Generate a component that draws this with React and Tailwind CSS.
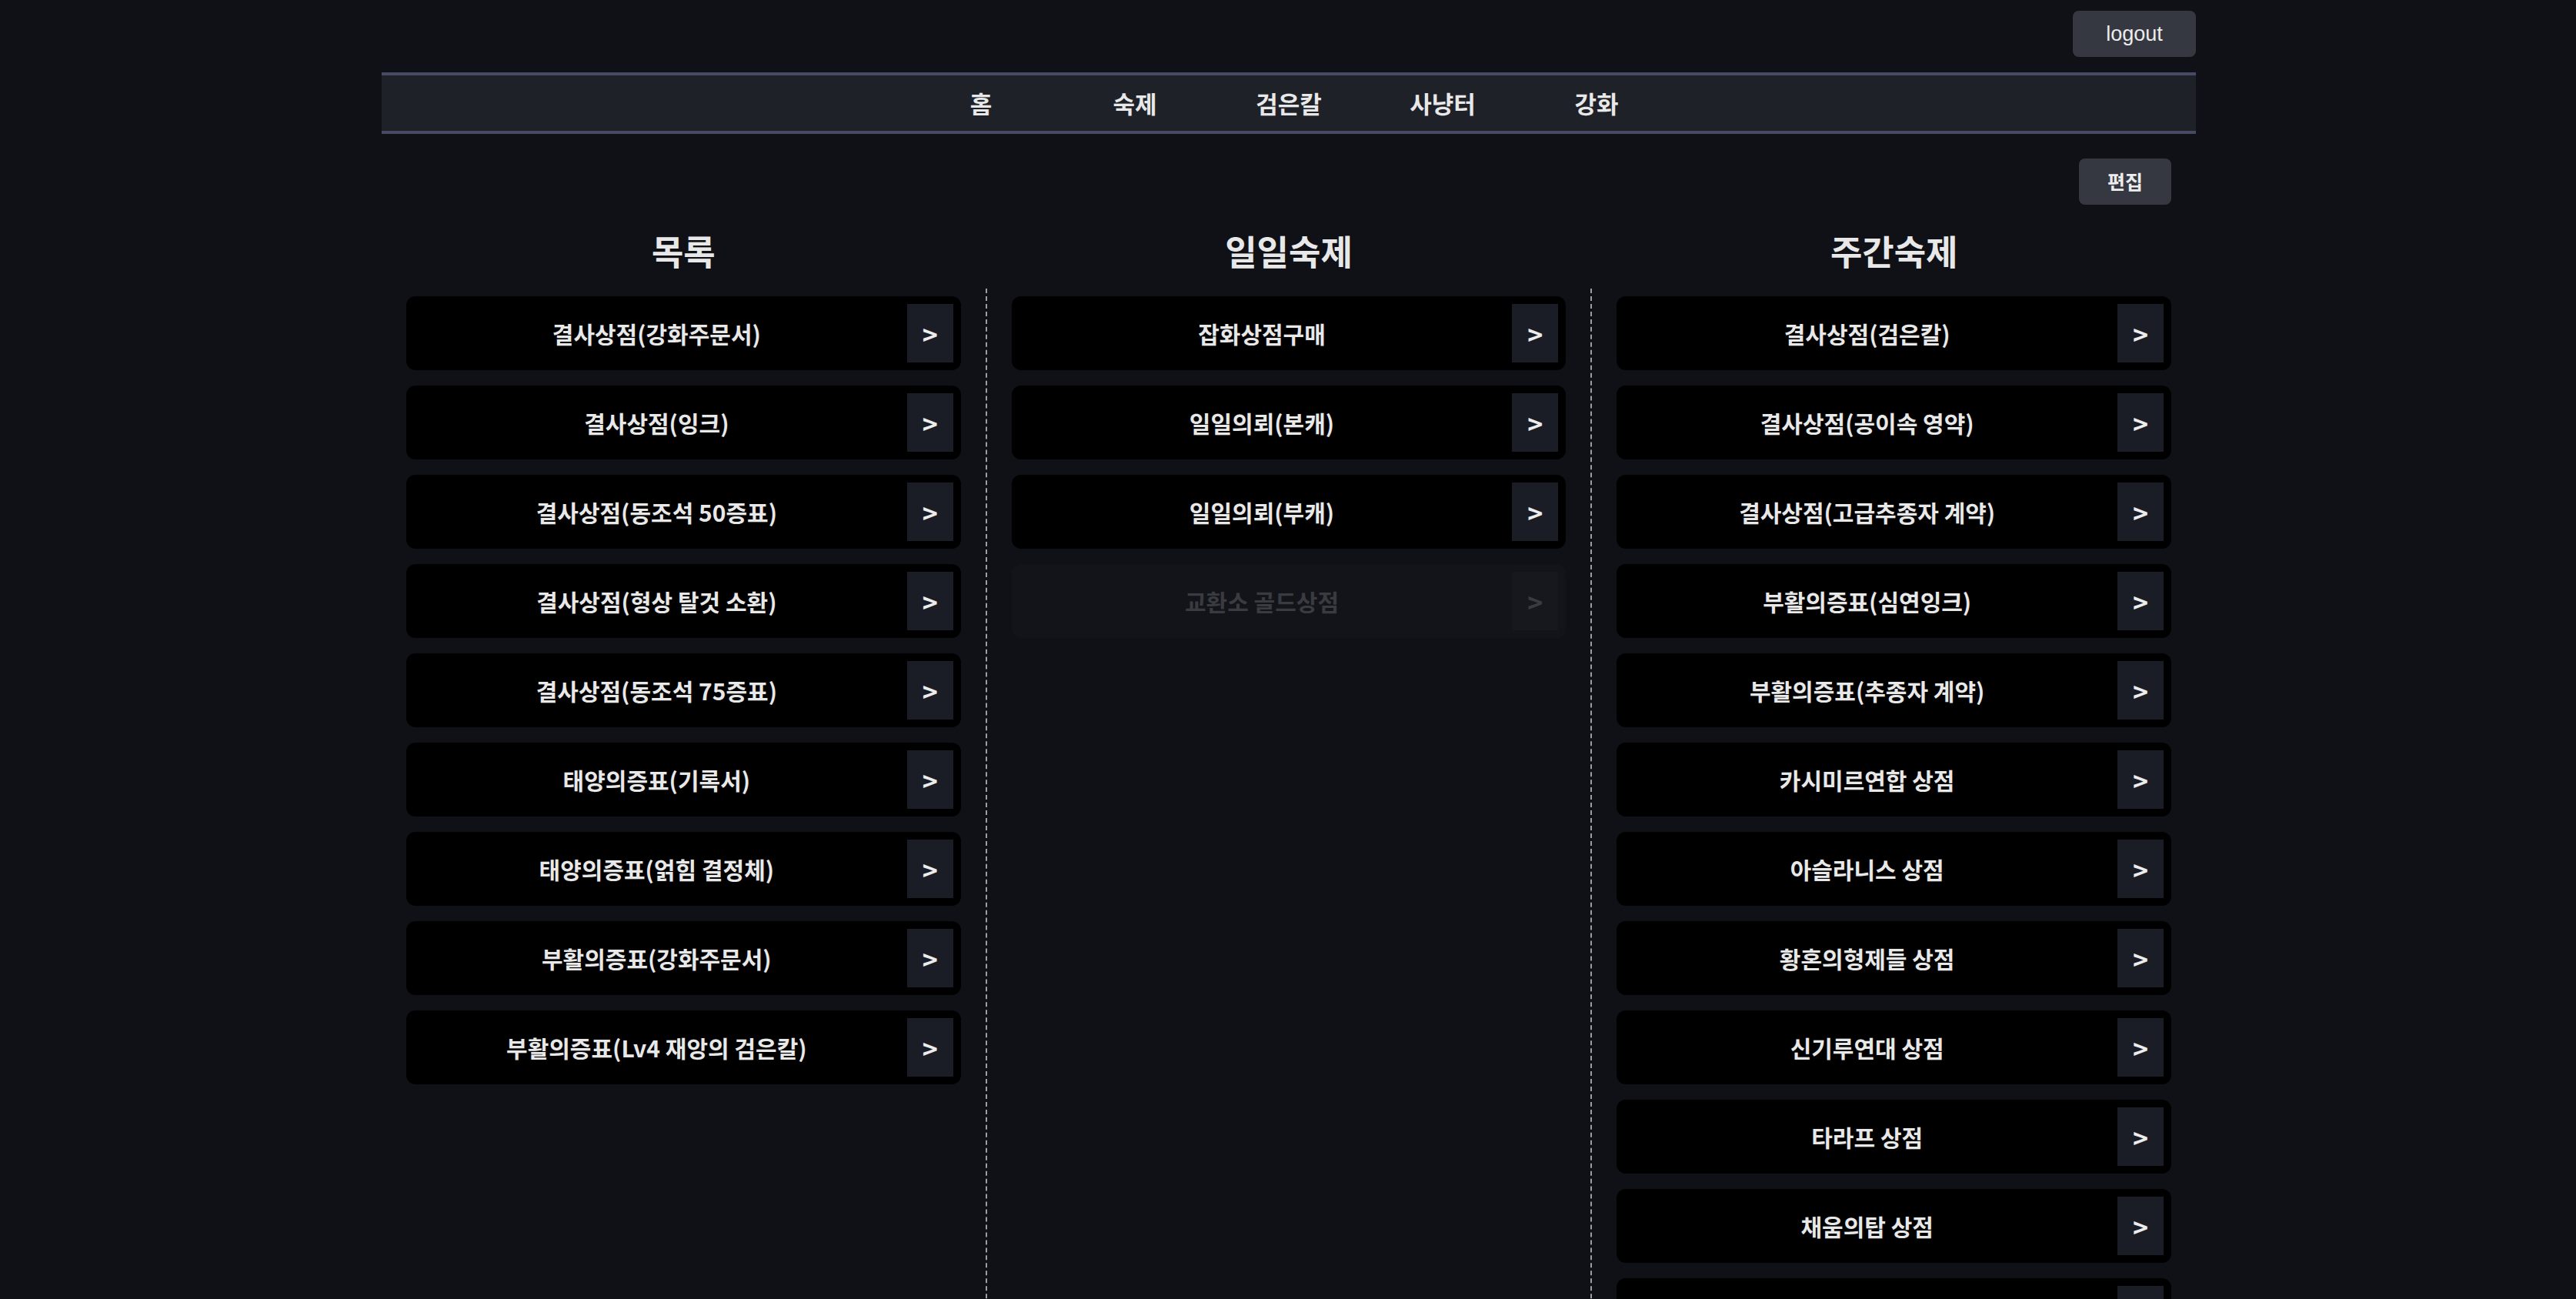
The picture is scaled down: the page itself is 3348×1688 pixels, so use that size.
import React from 'react';

const LIST = [
	'결사상점(강화주문서)',
	'결사상점(잉크)',
	'결사상점(동조석 50증표)',
	'결사상점(형상 탈것 소환)',
	'결사상점(동조석 75증표)',
	'태양의증표(기록서)',
	'태양의증표(얽힘 결정체)',
	'부활의증표(강화주문서)',
	'부활의증표(Lv4 재앙의 검은칼)',
];

const DAILY = [
	{ name: '잡화상점구매' },
	{ name: '일일의뢰(본캐)' },
	{ name: '일일의뢰(부캐)' },
	{ name: '교환소 골드상점', done: true },
];

const WEEKLY = [
	'결사상점(검은칼)',
	'결사상점(공이속 영약)',
	'결사상점(고급추종자 계약)',
	'부활의증표(심연잉크)',
	'부활의증표(추종자 계약)',
	'카시미르연합 상점',
	'아슬라니스 상점',
	'황혼의형제들 상점',
	'신기루연대 상점',
	'타라프 상점',
	'채움의탑 상점',
	'에레보스 상점',
];

const NAV = ['홈', '숙제', '검은칼', '사냥터', '강화'];

function TaskCard({ name, done }) {
	return (
		<div
			className={
				'flex h-[96px] items-center rounded-xl pr-[10px] ' +
				(done ? 'bg-[#131419]' : 'bg-black')
			}
		>
			<div
				className={
					'flex-1 text-center text-[30px] font-bold ' +
					(done ? 'text-[#3a3b41]' : 'text-[#e8e8e8]')
				}
			>
				{name}
			</div>
			<button
				className={
					'flex h-[76px] w-[60px] items-center justify-center text-[34px] font-bold ' +
					(done ? 'bg-[#17181d] text-[#3a3b41]' : 'bg-[#1b1d26] text-[#ececec]')
				}
			>
				&gt;
			</button>
		</div>
	);
}

function Column({ title, children }) {
	return (
		<div className="flex flex-1 flex-col">
			<h2 className="flex h-[80px] items-center justify-center text-[45px] font-bold text-[#e8e8e8]">
				{title}
			</h2>
			<div className="mt-[9px] flex flex-col gap-5 pt-[10px]">{children}</div>
		</div>
	);
}

export default function App() {
	return (
		<div
			className="min-h-screen bg-[#101116] text-[#e8e8e8]"
			style={{ fontFamily: '"Noto Sans CJK KR", "Noto Sans", sans-serif' }}
		>
			<div className="mx-auto w-[2360px] pt-[14px] pl-[2px]">
				<div className="flex justify-end">
					<button
						className="h-[60px] w-[160px] rounded-lg bg-[#363841] text-[27px] text-[#ececec]"
						style={{ fontFamily: '"Liberation Sans", Arial, sans-serif' }}
					>
						logout
					</button>
				</div>

				<nav className="mt-5 flex h-[80px] items-center justify-center border-y-4 border-[#464b63] bg-[#1f2129]">
					{NAV.map((item) => (
						<a
							key={item}
							className="w-[200px] text-center text-[31px] font-bold text-[#e8e8e8]"
						>
							{item}
						</a>
					))}
				</nav>

				<div className="px-8">
					<div className="mt-8 flex justify-end">
						<button className="h-[60px] w-[120px] rounded-lg bg-[#363841] text-[25px] font-bold text-[#ececec]">
							편집
						</button>
					</div>

					<div className="mt-[20px] flex">
						<Column title="목록">
							{LIST.map((name) => (
								<TaskCard key={name} name={name} />
							))}
						</Column>
						<div className="mx-8 mt-[89px] border-l-2 border-dashed border-[#9e9e9e]" />
						<Column title="일일숙제">
							{DAILY.map((t) => (
								<TaskCard key={t.name} name={t.name} done={t.done} />
							))}
						</Column>
						<div className="mx-8 mt-[89px] border-l-2 border-dashed border-[#9e9e9e]" />
						<Column title="주간숙제">
							{WEEKLY.map((name) => (
								<TaskCard key={name} name={name} />
							))}
						</Column>
					</div>
				</div>
			</div>
		</div>
	);
}
